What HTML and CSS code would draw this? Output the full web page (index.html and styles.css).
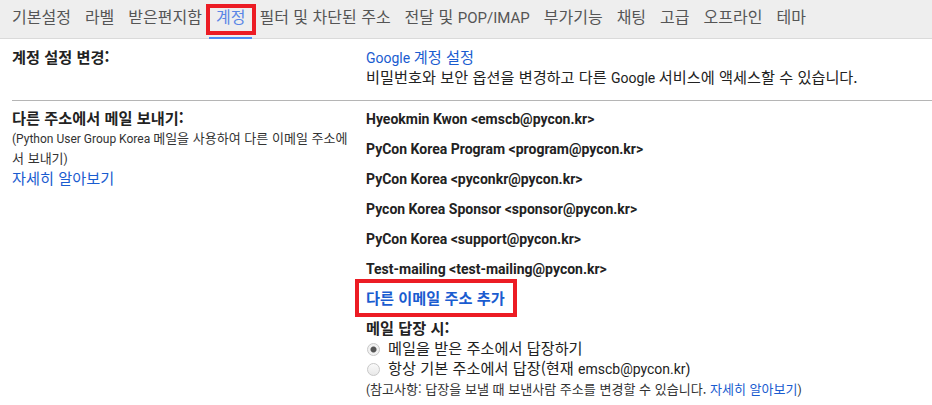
FILE: index.html
```html
<!DOCTYPE html>
<html lang="ko">
<head>
<meta charset="utf-8">
<title>설정 - 계정</title>
<link rel="stylesheet" href="styles.css">
</head>
<body>
<nav class="tabs">
  <a class="tab"><span class="k">기본설정</span></a>
  <a class="tab"><span class="k">라벨</span></a>
  <a class="tab"><span class="k">받은편지함</span></a>
  <a class="tab active"><span class="k">계정</span></a>
  <a class="tab"><span class="k">필터 및 차단된 주소</span></a>
  <a class="tab"><span class="k">전달 및 </span>POP/IMAP</a>
  <a class="tab"><span class="k">부가기능</span></a>
  <a class="tab"><span class="k">채팅</span></a>
  <a class="tab"><span class="k">고급</span></a>
  <a class="tab"><span class="k">오프라인</span></a>
  <a class="tab"><span class="k">테마</span></a>
</nav>
<main class="content">
  <section class="row first">
    <div class="label"><div class="line"><span class="title k">계정 설정 변경:</span></div></div>
    <div class="value">
      <div class="line"><a class="link">Google <span class="k">계정 설정</span></a></div>
      <div class="line"><span class="k">비밀번호와 보안 옵션을 변경하고 다른 </span>Google <span class="k">서비스에 액세스할 수 있습니다.</span></div>
    </div>
  </section>
  <section class="row second">
    <div class="label">
      <div class="line"><span class="title k">다른 주소에서 메일 보내기:</span></div>
      <div class="small">(Python User Group Korea <span class="k">메일을 사용하여 다른 이메일 주소에서 보내기</span>)</div>
      <div class="line"><a class="link k">자세히 알아보기</a></div>
    </div>
    <div class="value">
      <div class="addr">Hyeokmin Kwon &lt;emscb@pycon.kr&gt;</div>
      <div class="addr">PyCon Korea Program &lt;program@pycon.kr&gt;</div>
      <div class="addr">PyCon Korea &lt;pyconkr@pycon.kr&gt;</div>
      <div class="addr">Pycon Korea Sponsor &lt;sponsor@pycon.kr&gt;</div>
      <div class="addr">PyCon Korea &lt;support@pycon.kr&gt;</div>
      <div class="addr">Test-mailing &lt;test-mailing@pycon.kr&gt;</div>
      <div class="addrow"><a class="link add"><span class="k">다른 이메일 주소 추가</span></a></div>
      <div class="line"><span class="title k">메일 답장 시:</span></div>
      <label class="radio"><span class="dot checked"></span><span><span class="k">메일을 받은 주소에서 답장하기</span></span></label>
      <label class="radio"><span class="dot"></span><span><span class="k">항상 기본 주소에서 답장(현재 </span>emscb@pycon.kr)</span></label>
      <div class="small note">(<span class="k">참고사항: 답장을 보낼 때 보낸사람 주소를 변경할 수 있습니다. </span><a class="link k">자세히 알아보기</a>)</div>
    </div>
  </section>
</main>
</body>
</html>
```
FILE: styles.css
```css
html, body {
  margin: 0;
  padding: 0;
  background: #ffffff;
}
body {
  font-family: Roboto, "Noto Sans CJK KR", sans-serif;
  font-size: 14px;
  line-height: 20px;
  color: #222222;
  width: 932px;
  overflow: hidden;
}
.k {
  font-family: "Noto Sans CJK KR", Roboto, sans-serif;
  font-size: 1.087em;
  line-height: 1;
}
.tabs {
  display: flex;
  height: 38px;
  padding-left: 5px;
  background: #eeeeee;
  border-bottom: 1px solid #dadada;
  font-size: 15px;
}
.tab {
  position: relative;
  padding: 0 7px;
  line-height: 37px;
  color: #555555;
  white-space: nowrap;
}
.tab .k {
  font-size: 16px;
}
.tab.active {
  color: #5a86e6;
}
.tab.active::after {
  content: "";
  position: absolute;
  left: 0;
  right: 0;
  bottom: -1px;
  height: 2px;
  background: #4d8cf5;
}
.tab.active::before {
  content: "";
  position: absolute;
  left: -3px;
  right: -4px;
  top: 4px;
  bottom: 3px;
  border: 4px solid #ec1c24;
}
.row {
  display: flex;
}
.row.first {
  padding: 9px 0 12px;
  margin: 0 0 0 12px;
  border-bottom: 1px solid #b5b5b5;
}
.row.second {
  padding: 8px 0 0 12px;
}
.label {
  width: 354px;
  flex: none;
}
.label .small {
  width: 340px;
}
.value {
  flex: 1;
}
.line {
  line-height: 20px;
}
.title {
  font-weight: bold;
}
.small {
  font-size: 12px;
  line-height: 20px;
  color: #333333;
}
.note {
  margin-top: 1px;
}
.link {
  color: #1a5cd0;
  cursor: pointer;
}
.addr {
  font-weight: bold;
  line-height: 20px;
  margin-bottom: 10px;
}
.addrow {
  line-height: 20px;
  margin-bottom: 10px;
}
.link.add {
  position: relative;
  font-weight: bold;
}
.link.add::after {
  content: "";
  position: absolute;
  left: -11px;
  right: -12px;
  top: -12px;
  bottom: -10px;
  border: 4px solid #ec1c24;
}
.radio {
  display: flex;
  align-items: center;
  height: 20px;
  line-height: 20px;
  color: #222222;
}
.dot {
  width: 11px;
  height: 11px;
  margin: 0 8px 0 1px;
  border: 1px solid #c8c8c8;
  border-radius: 50%;
  background: linear-gradient(#fafafa, #e8e8e8);
  box-sizing: content-box;
  flex: none;
}
.dot.checked {
  background: radial-gradient(circle, #555555 0, #555555 2.5px, #f1f1f1 3.5px);
}
```
